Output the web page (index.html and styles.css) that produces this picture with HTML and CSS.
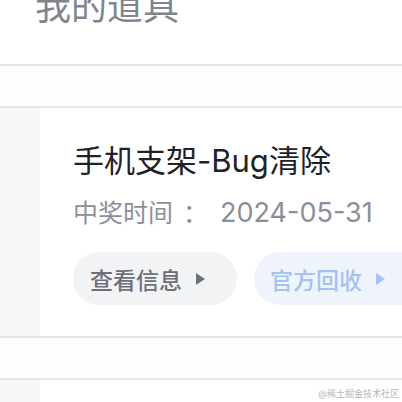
FILE: index.html
```html
<!DOCTYPE html>
<html lang="zh">
<head>
<meta charset="utf-8">
<link rel="stylesheet" href="styles.css">
</head>
<body>
<div class="page">
  <header class="header"><h1 class="page-title">我的道具</h1></header>
  <div class="divider"></div>
  <div class="spacer"></div>
  <div class="divider"></div>
  <section class="card">
    <div class="strip"></div>
    <div class="card-body">
      <div class="item-title">手机支架-Bug清除</div>
      <div class="item-date"><span class="label">中奖时间<span class="colon">：</span></span><span class="date">2024-05-31</span></div>
      <div class="actions">
        <button class="btn btn-gray">查看信息<span class="tri"></span></button>
        <button class="btn btn-blue">官方回收<span class="tri"></span></button>
      </div>
    </div>
  </section>
  <div class="divider"></div>
  <div class="spacer"></div>
  <div class="divider"></div>
  <section class="card">
    <div class="strip"></div>
    <div class="card-body"></div>
  </section>
  <div class="watermark">@稀土掘金技术社区</div>
</div>
</body>
</html>
```
FILE: styles.css
```css
* { box-sizing: border-box; }
html, body { margin: 0; padding: 0; background: #fff; }
body {
  font-family: Inter, "Noto Sans CJK SC", sans-serif;
  width: 402px;
  height: 402px;
  overflow: hidden;
}
.page { position: relative; height: 402px; overflow: hidden; }
.header { display: flow-root; height: 64px; padding-left: 35px; }
.page-title {
  margin: 0;
  font-size: 36px;
  font-weight: 400;
  color: #80848c;
  line-height: 36px;
  margin-top: -11px;
}
.divider { height: 2px; background: #e5e6e8; }
.spacer { height: 40px; background: #fdfdfd; }
.card { display: flex; height: 228px; }
.strip { width: 40px; background: #f5f6f8; }
.card-body { flex: 1; padding-left: 33px; padding-top: 35px; overflow: hidden; }
.item-title {
  font-size: 31px;
  line-height: 36px;
  color: #1f2329;
  white-space: nowrap;
}
.item-date {
  margin-top: 18px;
  font-size: 27px;
  line-height: 32px;
  color: #8a8f99;
  white-space: nowrap;
}
.label { font-size: 25px; }
.colon { margin-left: 10px; }
.date { margin-left: 12px; }
.actions {
  display: flex;
  gap: 17px;
  margin-top: 23px;
}
.btn {
  flex: none;
  display: flex;
  align-items: center;
  height: 53px;
  border: none;
  border-radius: 27px;
  font-family: Inter, "Noto Sans CJK SC", sans-serif;
  font-size: 23px;
  font-weight: 500;
  padding: 0 16px 0 17px;
  white-space: nowrap;
}
.btn-gray { width: 164px; background: #f2f3f5; color: #6d7079; }
.btn-blue { width: 180px; background: #eff3fb; color: #a3c3f4; padding-left: 16px; }
.tri {
  display: inline-block;
  width: 0;
  height: 0;
  margin-left: 14px;
  border-top: 6px solid transparent;
  border-bottom: 6px solid transparent;
  border-left: 9px solid currentColor;
}
.watermark {
  position: absolute;
  right: 3px;
  bottom: 3px;
  font-size: 9px;
  line-height: 10px;
  color: #b3b6bb;
}
```
